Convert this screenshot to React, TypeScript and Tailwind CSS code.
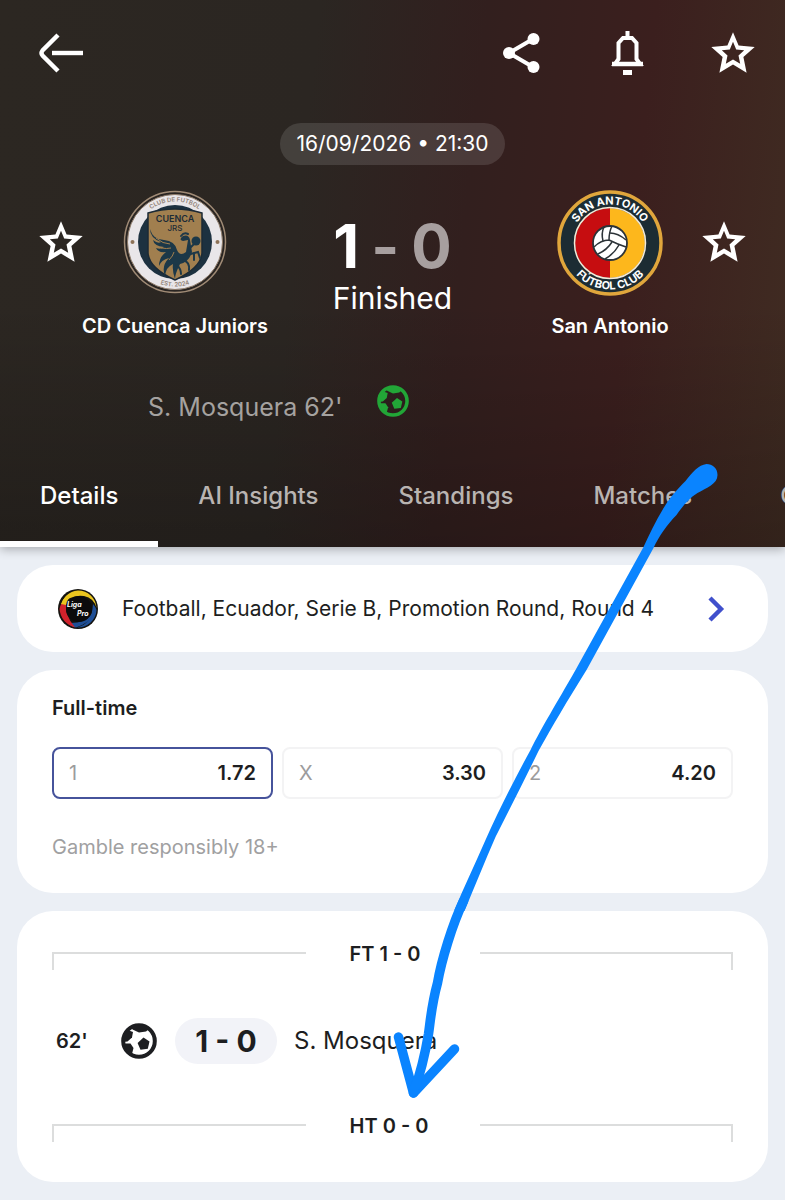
import { useState } from 'react';

const TABS = ['Details', 'AI Insights', 'Standings', 'Matches', 'Commentary'];

const ODDS = [
  { label: '1', value: '1.72' },
  { label: 'X', value: '3.30' },
  { label: '2', value: '4.20' },
];

const StarIcon = () => (
  <svg viewBox="0 0 44 44" className="size-11" fill="currentColor" fillRule="evenodd">
    <path d="M22 1.3 L27.6 14.6 L43.7 16 L32.4 26 L35.6 41.7 L22 33.600 L8.4 41.7 L11.6 26 L0.3 16 L16.4 14.6 Z M22 10.8 L18.8 18.600 L10.8 19.2 L16.500 24.6 L14.8 32.800 L22 28.600 L29.2 32.800 L27.500 24.6 L33.2 19.2 L25.2 18.600 Z" />
  </svg>
);

const BallIcon = ({ className }: { className: string }) => (
  <svg viewBox="0 0 36 36" className={className} fill="currentColor">
    <circle cx="18" cy="18" r="15.8" fill="none" stroke="currentColor" strokeWidth="4" />
    <path d="M10 3 L11.5 6.5 L18 9.5 L25 8.5 L28 6 L24 2 Z" />
    <path d="M2 11 L8 7.5 L12 9 L11 14.5 L6.5 18.5 L2 19 Z" />
    <path d="M3 20.5 L9.5 20.5 L12.5 25 L11 31 L7 31 Z" />
    <path d="M22.5 14.5 L28.5 18.5 L26.8 25.8 L19.5 26.8 L16.6 20 Z" />
  </svg>
);

const CuencaBadge = () => (
  <svg viewBox="0 0 104 104" className="size-[104px]" role="img" aria-label="CD Cuenca Juniors crest">
    <defs>
      <path id="cuenca-top" d="M11.5 52 A40.5 40.5 0 0 1 92.5 52" />
      <path id="cuenca-bottom" d="M7.5 52 A44.5 44.5 0 0 0 96.5 52" />
    </defs>
    <circle cx="52" cy="52" r="50.5" fill="#2a2522" stroke="#a08b76" strokeWidth="1.5" />
    <circle cx="52" cy="52" r="47.5" fill="#e9e6e9" stroke="#8d7a68" strokeWidth="1" />
    <circle cx="52" cy="52" r="37" fill="#1d3140" />
    <path d="M25 23 Q52 15 79 23 V63 Q78 78 52 90 Q26 78 25 63 Z" fill="#a17f4f" stroke="#1b2a36" strokeWidth="1.5" />
    <g fontFamily="Inter, sans-serif" textAnchor="middle" fill="#1d2b36">
      <text fontSize="6" fontWeight="600" fill="#8f8074">
        <textPath href="#cuenca-top" startOffset="50%">CLUB DE FUTBOL</textPath>
      </text>
      <text fontSize="6" fontWeight="600" fill="#8f8074">
        <textPath href="#cuenca-bottom" startOffset="50%">EST. 2024</textPath>
      </text>
      <text x="52" y="32" fontSize="9" fontWeight="600">CUENCA</text>
      <text x="52" y="41" fontSize="8" fontWeight="500">JRS</text>
    </g>
    <circle cx="9.5" cy="52" r="2" fill="#8d7257" />
    <circle cx="94.5" cy="52" r="2" fill="#8d7257" />
    <g fill="#1c3848">
      <path d="M27 39 Q30 50 41 50 Q52 51 54 60 Q57 67 63 62 L65 50 L60 51 Q55 50 60 46 Q66 44 67 50 L69 62 Q66 72 57 74 Q52 84 52 89 Q49 80 50 74 Q43 77 42 86 Q38 76 46 68 Q38 70 36 76 Q36 67 43 62 Q35 63 33 58 Q38 60 41 57 Q31 56 30 50 Q35 54 38 52 Q27 48 27 39 Z" />
      <circle cx="73" cy="51" r="4.5" />
    </g>
    <g fill="none" stroke="#1c3848" strokeWidth="2" strokeLinecap="round">
      <path d="M65 60 L71 54" />
      <path d="M64 65 L75 62 L77 68 M71 63 L71 70" />
      <path d="M60 70 Q67 72 66 80 M54 75 Q58 79 58 84" />
      <path d="M58 46 Q61 42 65 44" />
    </g>
    <path d="M33 48 Q40 54 47 54 M38 58 Q44 59 48 58 M46 70 Q50 66 51 62" fill="none" stroke="#a17f4f" strokeWidth="1" />
  </svg>
);

const SanAntonioBadge = () => (
  <svg viewBox="0 0 106 106" className="size-[106px]" role="img" aria-label="San Antonio crest">
    <defs>
      <path id="antonio-top" d="M14.5 53 A38.5 38.5 0 0 1 91.5 53" />
      <path id="antonio-bottom" d="M6.5 53 A46.5 46.5 0 0 0 99.5 53" />
    </defs>
    <circle cx="53" cy="53" r="51" fill="#1c2c33" stroke="#e0a63c" strokeWidth="3.5" />
    <path d="M53 18 A35 35 0 0 0 53 88 Z" fill="#c60d10" />
    <path d="M53 18 A35 35 0 0 1 53 88 Z" fill="#fdb71c" />
    <circle cx="53" cy="53" r="35.5" fill="none" stroke="#f3ead8" strokeWidth="1.5" />
    <g fontFamily="Inter, sans-serif" fontSize="11" fontWeight="700" textAnchor="middle" fill="#fff">
      <text>
        <textPath href="#antonio-top" startOffset="50%">SAN ANTONIO</textPath>
      </text>
      <text>
        <textPath href="#antonio-bottom" startOffset="50%">FÚTBOL CLUB</textPath>
      </text>
    </g>
    <circle cx="53" cy="53" r="17" fill="#fff" stroke="#2c3338" strokeWidth="1.8" />
    <g fill="none" stroke="#2c3338" strokeWidth="1.5">
      <path d="M52 50 Q52 42 55 36 M52 50 Q44 50 37 57 M52 50 Q60 54 69 57" />
      <path d="M46 51 Q44 43 47 37" />
      <path d="M55 52 Q50 60 41 64 M62 55 Q57 64 48 69" />
      <path d="M53 43 Q61 43 69 50" />
    </g>
  </svg>
);

const LigaProLogo = () => (
  <svg viewBox="0 0 40 40" className="size-10 shrink-0" role="img" aria-label="Liga Pro">
    <circle cx="20" cy="20" r="20" fill="#14130f" />
    <path d="M20 1.5 A18.5 18.5 0 0 1 38.500 19 Q36 9 26 7 Q12 5 3 17 Q6 3 20 1.5 Z" fill="#eac51f" />
    <path d="M38.5 21 A18.5 18.5 0 0 1 19 38.5 Q34 35 35 15 Q37 17 38.500 21 Z" fill="#1f4f96" />
    <path d="M35 24 Q32 34 18 38.500 Q12 37 10 34 Q26 35 35 24 Z" fill="#1f4f96" />
    <path d="M1.5 20 Q3 34 17 38.5 Q12 33 9 25 Q7 18 9 11 Q2 14 1.5 20 Z" fill="#d0222c" />
    <path d="M3 15 Q7 5 17 3 Q9 9 8 16 Z" fill="#eac51f" />
    <circle cx="21" cy="20" r="13" fill="#0b0b0c" />
    <g fontFamily="Inter, sans-serif" fontSize="7" fontWeight="700" fontStyle="italic" fill="#fff">
      <text x="9" y="18">Liga</text>
      <text x="19" y="27">Pro</text>
    </g>
  </svg>
);

const PeriodDivider = ({ label }: { label: string }) => (
  <div className="grid grid-cols-[1fr_174px_1fr] items-start">
    <span className="mt-3 h-[18px] border-t-2 border-l-2 border-[#dcdddd]" />
    <span className="pl-11 text-xl leading-7 font-semibold">{label}</span>
    <span className="mt-3 h-[18px] border-t-2 border-r-2 border-[#dcdddd]" />
  </div>
);

const PointerStroke = () => (
  <svg
    viewBox="392.5 460 330 645"
    className="pointer-events-none absolute top-[460px] left-1/2 h-[645px] w-[330px]"
    aria-hidden="true"
  >
    <path
      d="M706 464 C698 465 692 472 685 481 C676 490 670 497 665 505 C656 519 649 534 643 547 L575 670 C555 705 542 726 530 750 C513 781 498 811 485 840 C474 865 463 888 454 910 L464 911 C474 887 484 862 495 837 C509 809 524 780 538 751 C552 726 566 702 586 670 L653 548 C658 537 667 524 676 515 C683 505 689 498 697 493 C706 488 717 484 717 475 C717 468 712 464 706 464 Z"
      fill="#0a84ff"
    />
    <g fill="none" stroke="#0a84ff" strokeWidth="9.5" strokeLinecap="round" strokeLinejoin="round">
      <path d="M463 901 C452 924 441 960 437 983 C431 1005 430 1020 428 1034 C424 1058 419 1076 413 1093" />
      <path d="M398 1037 L413 1093 L454 1049" />
      <path d="M417 1080 L413 1091" />
    </g>
  </svg>
);

export default function App() {
  const [activeTab, setActiveTab] = useState('Details');
  const [pick, setPick] = useState('1');

  return (
    <div className="relative min-h-screen overflow-hidden bg-[#ebeff5] font-['Inter',sans-serif] text-[#1d1e21]">
      <header className="relative bg-[linear-gradient(180deg,rgba(0,0,0,0)_55%,rgba(0,0,0,0.22)_100%),linear-gradient(96deg,#2c2722_0%,#2b2622_38%,#321f1e_58%,#3b1f1e_78%,#402c22_100%)] text-white shadow-[0_2px_10px_rgba(0,0,0,0.3)]">
        <div className="flex items-center justify-between pt-[31px] pr-[30px] pl-[38px]">
          <button aria-label="Back">
            <svg viewBox="0 0 46 44" className="h-11 w-[46px]" fill="none" stroke="currentColor" strokeWidth="4.4">
              <path d="M20 4 L4.5 19.5 Q2.5 22 4.5 24.5 L20 40" />
              <path d="M14 22 H45" />
            </svg>
          </button>
          <div className="flex items-center gap-[62px]">
            <button aria-label="Share">
              <svg viewBox="0 0 44 44" className="size-11" fill="currentColor" stroke="currentColor">
                <path d="M34 8 L10 22 L34 36" fill="none" strokeWidth="4" />
                <circle cx="34.5" cy="8" r="6" stroke="none" />
                <circle cx="10" cy="22" r="6" stroke="none" />
                <circle cx="34.5" cy="36" r="6" stroke="none" />
              </svg>
            </button>
            <button aria-label="Notifications">
              <svg viewBox="0 0 44 44" className="size-11" fill="none" stroke="currentColor" strokeWidth="4">
                <path d="M22.500 0 V7" />
                <path d="M13.500 28 V12 L18 7 H27 L31.500 12 V28 L35 33 H10 Z" />
                <path d="M7 33 H38" strokeWidth="4.5" />
                <path d="M18 41.500 H27" strokeWidth="5" />
              </svg>
            </button>
            <button aria-label="Follow match">
              <StarIcon />
            </button>
          </div>
        </div>

        <div className="mt-12 flex justify-center">
          <span className="rounded-full bg-white/12 px-4 text-[21px] leading-[42px]">16/09/2026 • 21:30</span>
        </div>

        <div className="mt-[25px] flex items-start justify-between px-[39px]">
          <div className="flex items-start">
            <button aria-label="Follow CD Cuenca Juniors" className="mt-[30px]">
              <StarIcon />
            </button>
            <div className="flex w-[184px] flex-col items-center">
              <CuencaBadge />
              <span className="mt-[18px] text-xl leading-7 font-semibold whitespace-nowrap">CD Cuenca Juniors</span>
            </div>
          </div>
          <div className="flex flex-col items-center pt-6">
            <div className="flex gap-3 text-[60px] leading-[64px] font-bold">
              <span>1</span>
              <span className="text-[#a79f9f]">-</span>
              <span className="text-[#a79f9f]">0</span>
            </div>
            <span className="text-[30px] leading-10">Finished</span>
          </div>
          <div className="flex items-start">
            <div className="flex w-[184px] flex-col items-center">
              <SanAntonioBadge />
              <span className="mt-4 text-xl leading-7 font-semibold whitespace-nowrap">San Antonio</span>
            </div>
            <button aria-label="Follow San Antonio" className="mt-[30px]">
              <StarIcon />
            </button>
          </div>
        </div>

        <div className="mt-[45px] grid grid-cols-[1fr_32px_1fr] items-start gap-[34px]">
          <span className="pt-1 text-right text-[25px] leading-9 text-[#a5a2a0]">S. Mosquera 62'</span>
          <BallIcon className="size-8 text-[#22a637]" />
        </div>

        <nav className="mt-[26px] flex overflow-hidden">
          {TABS.map((tab) => (
            <button
              key={tab}
              onClick={() => setActiveTab(tab)}
              className={`h-24 shrink-0 border-b-6 px-10 text-2xl font-medium last:pl-12 ${
                activeTab === tab ? 'border-white text-white' : 'border-transparent text-[#b9b4b1]'
              }`}
            >
              {tab}
            </button>
          ))}
        </nav>
      </header>

      <main className="flex flex-col gap-[18px] px-[17px] pt-[18px] pb-[17px]">
        <a href="#league" className="flex h-[87px] items-center rounded-[36px] bg-white pr-[43px] pl-[41px]">
          <LigaProLogo />
          <span className="ml-6 flex-1 text-[21px] whitespace-nowrap">
            Football, Ecuador, Serie B, Promotion Round, Round 4
          </span>
          <svg viewBox="0 0 18 28" className="h-7 w-[18px]" fill="none" stroke="#4050cc" strokeWidth="4.4">
            <path d="M3 3 L14 14 L3 25" />
          </svg>
        </a>

        <section className="rounded-[36px] bg-white px-[35px] pt-6 pb-8">
          <h2 className="text-xl leading-7 font-semibold">Full-time</h2>
          <div className="mt-[25px] grid grid-cols-3 gap-[9px]">
            {ODDS.map(({ label, value }) => (
              <button
                key={label}
                onClick={() => setPick(label)}
                className={`flex h-[52px] items-center justify-between rounded-lg border-2 px-[15px] text-xl ${
                  pick === label ? 'border-[#46539b]' : 'border-[#f3f3f4]'
                }`}
              >
                <span className="text-[#9c9c9d]">{label}</span>
                <span className="font-semibold">{value}</span>
              </button>
            ))}
          </div>
          <p className="mt-[34px] text-xl leading-7 text-[#a0a0a1]">Gamble responsibly 18+</p>
        </section>

        <section className="rounded-[36px] bg-white px-[35px] pt-[29px] pb-10">
          <PeriodDivider label="FT 1 - 0" />
          <div className="my-12 flex h-[46px] items-center">
            <span className="w-[69px] pl-1 text-xl font-semibold">62'</span>
            <BallIcon className="size-9" />
            <span className="ml-[18px] w-[102px] rounded-full bg-[#f2f3f8] text-center text-[30px] leading-[46px] font-bold">
              1 - 0
            </span>
            <span className="ml-[17px] text-2xl">S. Mosquera</span>
          </div>
          <PeriodDivider label="HT 0 - 0" />
        </section>
      </main>

      <PointerStroke />
    </div>
  );
}
